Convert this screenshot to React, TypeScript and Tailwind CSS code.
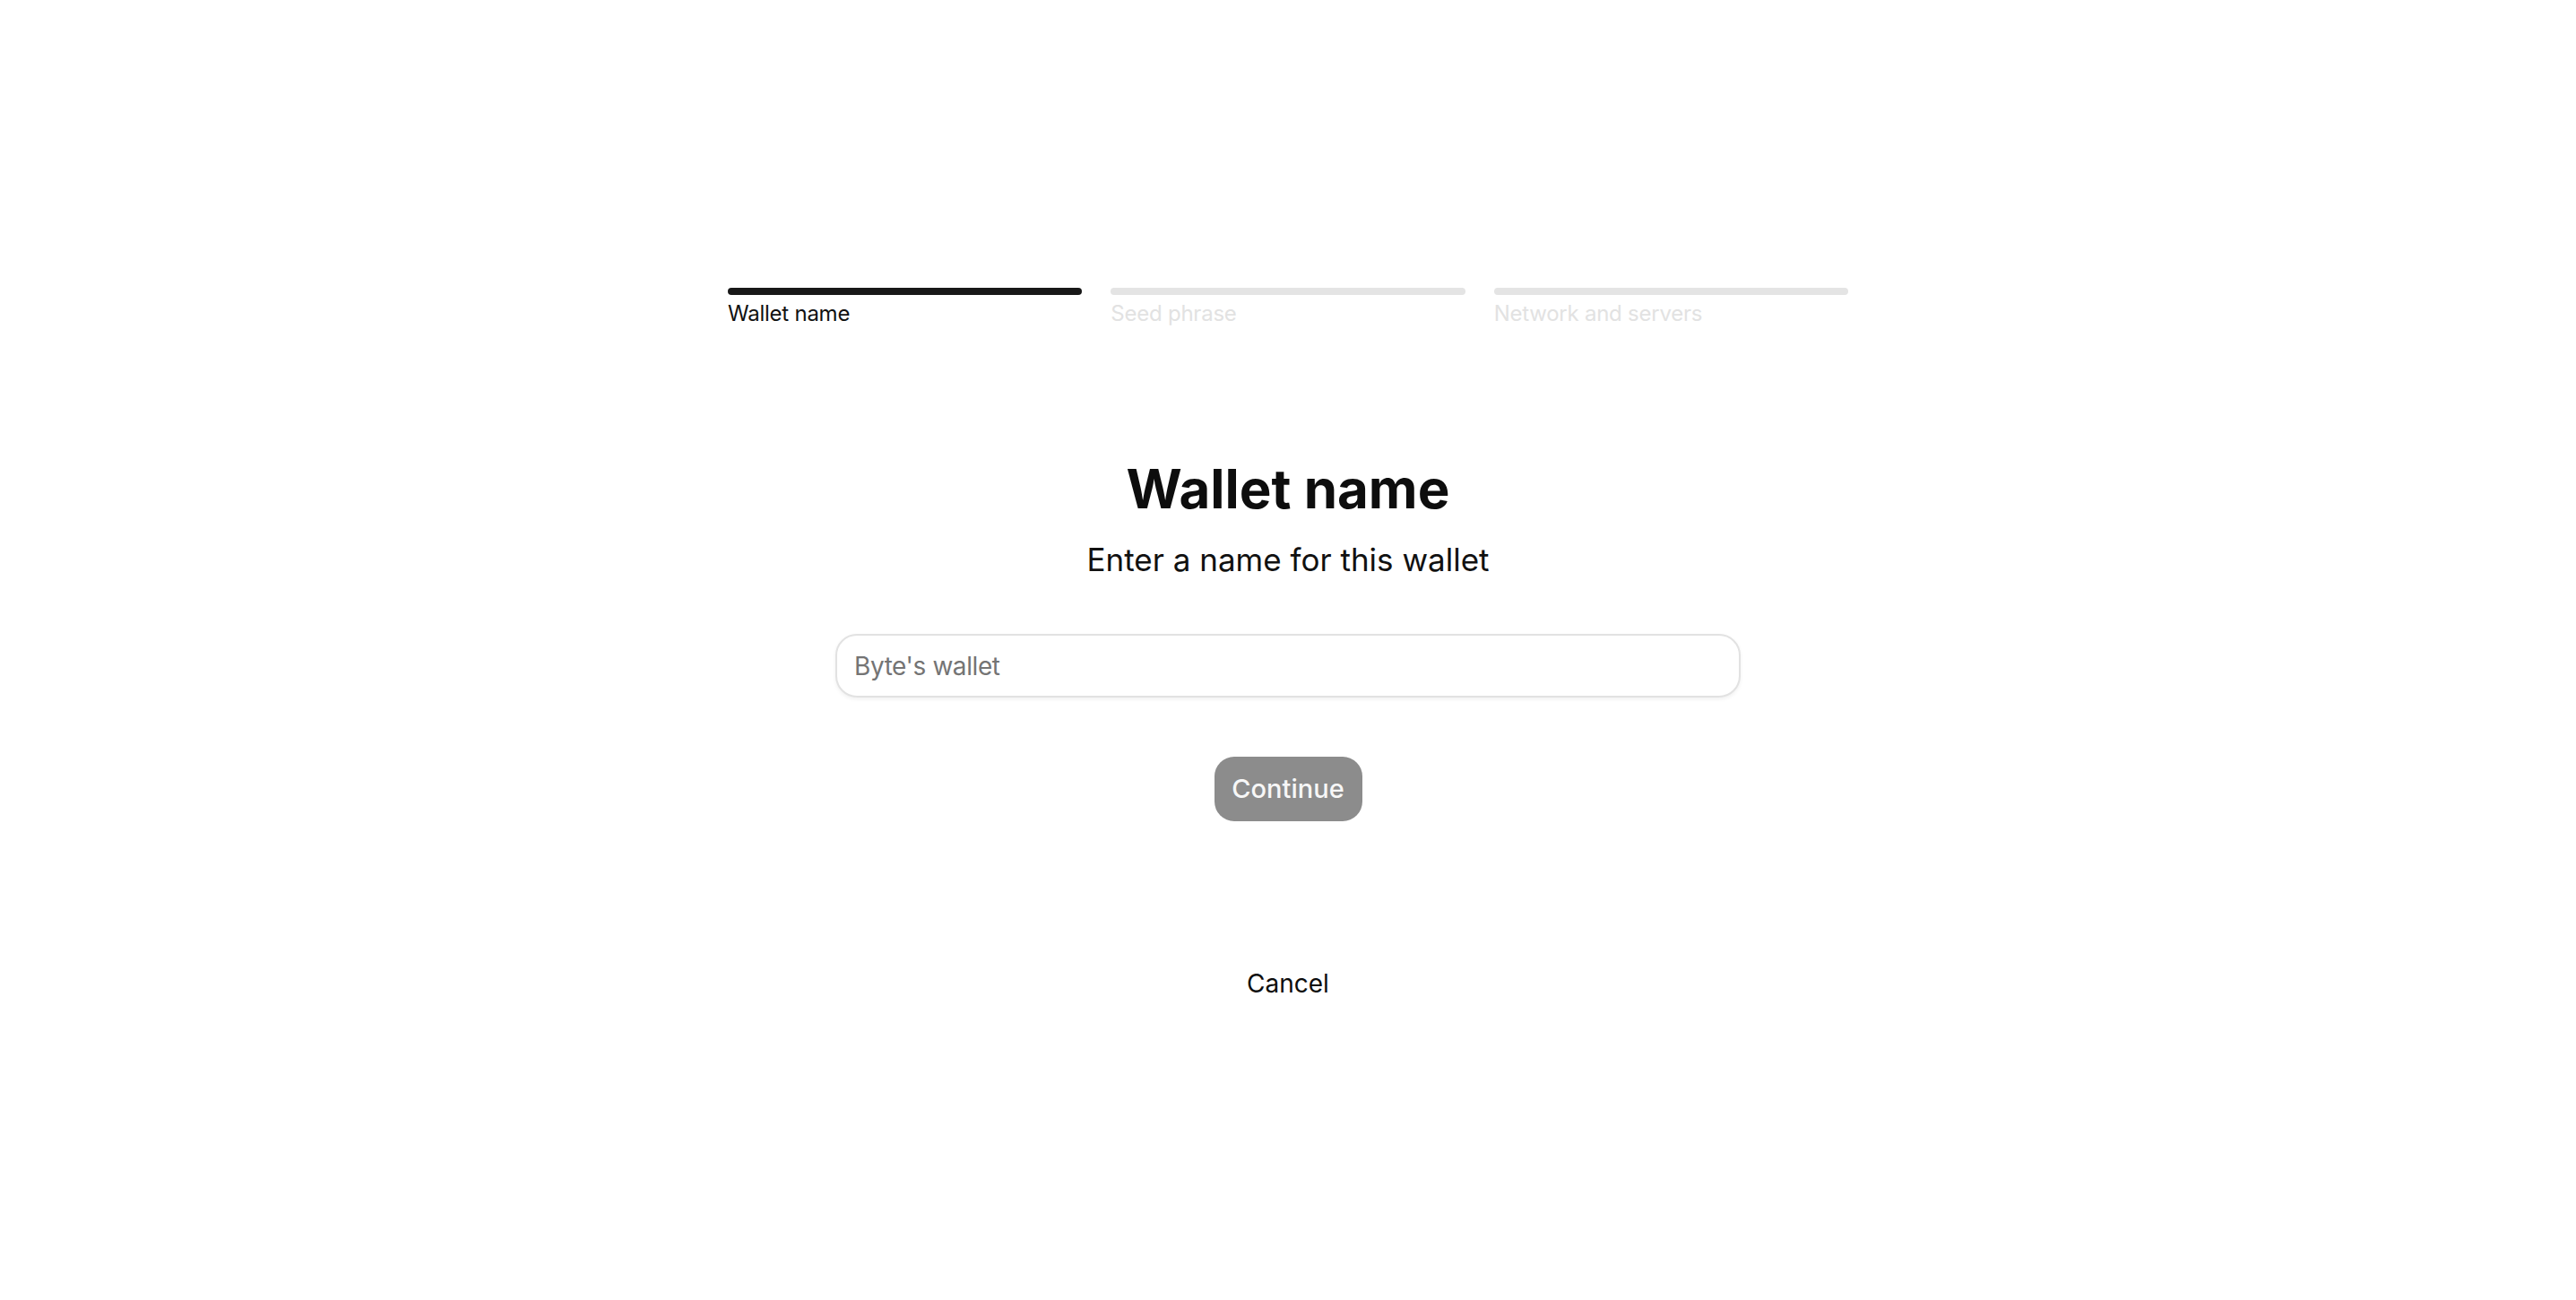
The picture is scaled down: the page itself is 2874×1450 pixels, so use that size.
import React from "react";

const steps = [
  { label: "Wallet name", active: true },
  { label: "Seed phrase", active: false },
  { label: "Network and servers", active: false },
];

export default function App() {
  return (
    <div
      className="min-h-screen w-full bg-white flex flex-col items-center"
      style={{ fontFamily: "Inter, 'Noto Sans', sans-serif" }}
    >
      <div className="w-[1250px] mt-[321px] grid grid-cols-3 gap-[32px]">
        {steps.map((s) => (
          <div key={s.label} className="flex flex-col">
            <div
              className={
                s.active
                  ? "h-[8px] rounded-full bg-[#181818]"
                  : "h-[8px] rounded-full bg-[#e4e4e4]"
              }
            />
            <div
              className={
                s.active
                  ? "mt-[6px] text-[24px] leading-[30px] tracking-[-0.01em] text-[#111111]"
                  : "mt-[6px] text-[24px] leading-[30px] tracking-[-0.01em] text-[#e2e2e2]"
              }
            >
              {s.label}
            </div>
          </div>
        ))}
      </div>

      <h1 className="mt-[144px] text-[60px] leading-[72px] font-bold text-[#0d0d0d]">
        Wallet name
      </h1>
      <p className="mt-[21px] text-[35px] leading-[44px] text-[#111111]">
        Enter a name for this wallet
      </p>

      <input
        type="text"
        placeholder="Byte's wallet"
        className="mt-[61px] w-[1010px] h-[71px] rounded-[24px] border-2 border-[#e2e2e2] bg-white px-[19px] text-[28px] tracking-[-0.015em] text-[#111111] placeholder:text-[#747474] outline-none shadow-[0_2px_4px_rgba(0,0,0,0.06)]"
      />

      <button className="mt-[66px] w-[165px] h-[72px] rounded-[22px] bg-[#8c8c8c] text-[29px] font-medium text-[#f7f7f7]">
        Continue
      </button>

      <button className="mt-[164px] text-[28px] leading-[34px] text-[#0d0d0d]">
        Cancel
      </button>
    </div>
  );
}
